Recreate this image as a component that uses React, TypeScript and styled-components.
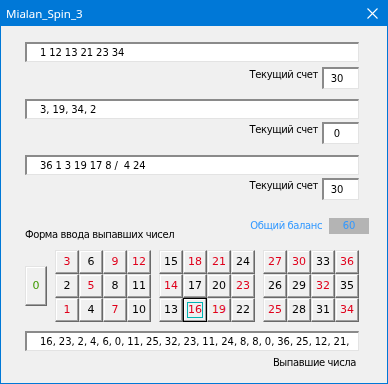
import styled, { createGlobalStyle } from "styled-components";

const GlobalStyle = createGlobalStyle`
  html, body {
    margin: 0;
    padding: 0;
    background: #ffffff;
  }
`;

const RED = new Set([1, 3, 5, 7, 9, 12, 14, 16, 18, 19, 21, 23, 25, 27, 30, 32, 34, 36]);

const Window = styled.div`
  box-sizing: border-box;
  width: 388px;
  height: 384px;
  border: 1px solid #0078d7;
  background: #f0f0f0;
  display: flex;
  flex-flow: column nowrap;
  font-family: "DejaVu Sans", Verdana, sans-serif;
  font-size: 10px;
  line-height: 14px;
  color: #000;
`;

const TitleBar = styled.div`
  height: 25px;
  background: #0078d7;
  display: flex;
  align-items: center;
  justify-content: space-between;
  padding: 0 9px 0 5px;
  color: #fff;
  font-family: "Noto Sans", "Open Sans", sans-serif;
  font-size: 11.5px;
`;

const Body = styled.div`
  display: flex;
  flex-flow: column nowrap;
  padding: 16px 0 0 24px;
  width: 334px;
`;

const TextBox = styled.div<{ $mt?: number }>`
  box-sizing: border-box;
  height: 20px;
  width: 334px;
  margin-top: ${({ $mt }) => $mt ?? 0}px;
  background: #fff;
  border-style: solid;
  border-width: 2px 1px 1px 2px;
  border-color: #8a8a8a #e3e3e3 #e3e3e3 #8a8a8a;
  padding-left: 13px;
  display: flex;
  align-items: center;
  white-space: pre;
  overflow: hidden;
  word-spacing: -0.3px;
`;

const Caption = styled.span`
  letter-spacing: -0.4px;
`;

const ScoreRow = styled.div<{ $mt: number }>`
  display: flex;
  justify-content: flex-end;
  align-items: flex-start;
  gap: 4px;
  margin-top: ${({ $mt }) => $mt}px;
`;

const Label = styled(Caption)`
  padding-top: 1px;
`;

const ScoreBox = styled.div`
  box-sizing: border-box;
  width: 37px;
  height: 22px;
  background: #fff;
  border-style: solid;
  border-width: 2px 1px 1px 2px;
  border-color: #8a8a8a #e3e3e3 #e3e3e3 #8a8a8a;
  padding-right: 8px;
  display: flex;
  align-items: center;
  justify-content: center;
`;

const InfoRow = styled.div`
  display: flex;
  justify-content: space-between;
  align-items: flex-start;
  width: 344px;
  height: 24px;
  margin-top: 18px;
`;

const FormLabel = styled(Caption)`
  margin-top: 10px;
`;

const Balance = styled.div`
  display: flex;
  align-items: center;
  gap: 7px;
  color: #3399ff;
`;

const BalanceBox = styled.div`
  width: 40px;
  height: 16px;
  background: #b4b4b4;
  color: #3399ff;
  display: flex;
  align-items: center;
  justify-content: center;
`;

const Keypad = styled.div`
  display: flex;
  align-items: center;
  gap: 8px;
  margin-top: 8px;
`;

const Group = styled.div`
  display: grid;
  grid-template-columns: repeat(4, 24px);
  grid-auto-rows: 24px;
`;

const Key = styled.div<{ $red?: boolean; $h?: number; $focus?: boolean }>`
  box-sizing: border-box;
  width: 24px;
  height: ${({ $h }) => $h ?? 24}px;
  background: #f0f0f0;
  border: 1px solid;
  border-color: ${({ $focus }) =>
    $focus ? "#000" : "#e3e3e3 #696969 #696969 #e3e3e3"};
  box-shadow: inset -1px -1px #a0a0a0, inset 1px 1px #ffffff;
  display: flex;
  align-items: center;
  justify-content: center;
  font-size: 11px;
  color: ${({ $red }) => ($red ? "#e0001b" : "#000")};
  position: relative;
`;

const FocusRing = styled.span`
  position: absolute;
  inset: 3px;
  border: 1px dotted #000;
  outline: 1px solid #00c0c0;
  outline-offset: -1px;
  mix-blend-mode: multiply;
`;

const ZeroKey = styled(Key)`
  color: #3e9a00;
`;

const BottomLabel = styled(Caption)`
  align-self: flex-end;
  margin-top: 5px;
  margin-right: 3px;
`;

function KeyGroup({ start }: { start: number }) {
  const cells: number[] = [];
  for (let row = 0; row < 3; row++) {
    for (let col = 0; col < 4; col++) {
      cells.push((start + col) * 3 + (3 - row));
    }
  }
  return (
    <Group>
      {cells.map((n) => (
        <Key key={n} $red={RED.has(n)} $focus={n === 16}>
          {n === 16 && <FocusRing />}
          {n}
        </Key>
      ))}
    </Group>
  );
}

export default function App() {
  const tickets = [
    { nums: "1 12 13 21 23 34", score: "30", top: 0, gap: 5 },
    { nums: "3, 19, 34, 2", score: "0", top: 10, gap: 3 },
    { nums: "36 1 3 19 17 8 /  4 24", score: "30", top: 11, gap: 3 },
  ];

  return (
    <>
      <GlobalStyle />
      <Window>
        <TitleBar>
          <span>Mialan_Spin_3</span>
          <svg width="11" height="11" viewBox="0 0 11 11">
            <path d="M0.5 0.5 L10.5 10.5 M10.5 0.5 L0.5 10.5" stroke="#fff" strokeWidth="1.1" />
          </svg>
        </TitleBar>
        <Body>
          {tickets.map((t, i) => (
            <div key={i}>
              <TextBox $mt={t.top}>{t.nums}</TextBox>
              <ScoreRow $mt={t.gap}>
                <Label>Текущий счет</Label>
                <ScoreBox>{t.score}</ScoreBox>
              </ScoreRow>
            </div>
          ))}
          <InfoRow>
            <FormLabel>Форма ввода выпавших чисел</FormLabel>
            <Balance>
              <Caption>Общий баланс</Caption>
              <BalanceBox>60</BalanceBox>
            </Balance>
          </InfoRow>
          <Keypad>
            <ZeroKey $h={40}>0</ZeroKey>
            <KeyGroup start={0} />
            <KeyGroup start={4} />
            <KeyGroup start={8} />
          </Keypad>
          <TextBox $mt={9}>
            16, 23, 2, 4, 6, 0, 11, 25, 32, 23, 11, 24, 8, 8, 0, 36, 25, 12, 21,
          </TextBox>
          <BottomLabel>Выпавшие числа</BottomLabel>
        </Body>
      </Window>
    </>
  );
}
